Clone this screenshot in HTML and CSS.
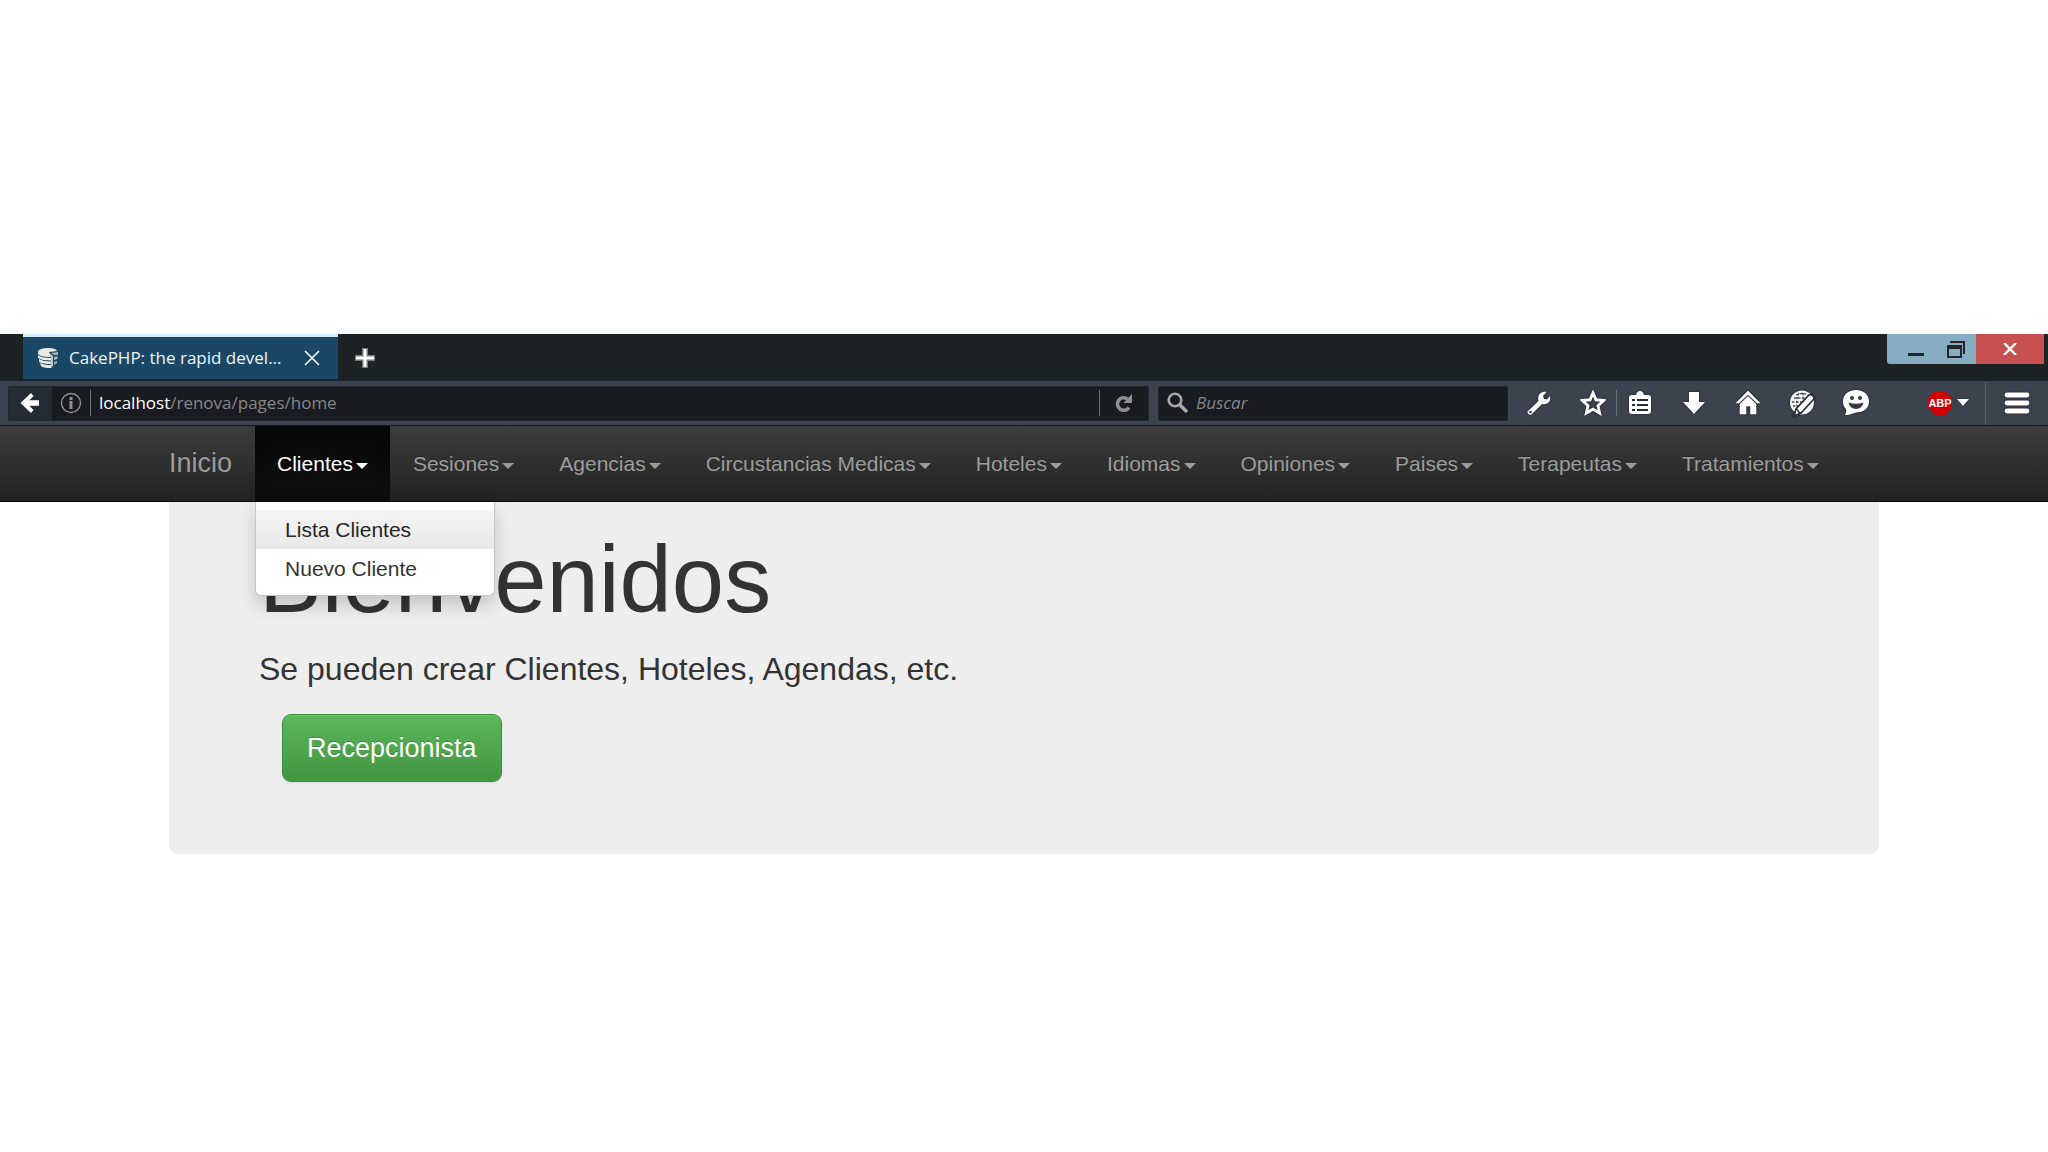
FILE: index.html
```html
<!DOCTYPE html>
<html lang="es">
<head>
<meta charset="utf-8">
<title>CakePHP: the rapid development php framework</title>
<link rel="stylesheet" href="styles.css">
</head>
<body>
<div class="browser">
  <div class="tabstrip">
    <div class="tab">
      <svg class="favicon" width="22" height="22" viewBox="0 0 22 22" aria-hidden="true">
        <path d="M1 4 Q3 1 11 1 Q19 1 20 4 L12 5 L14 10 Q4 10.500 1 7Z" fill="#e9e9e6"/>
        <path d="M1 8 Q4 11 14 11 V13.500 Q5 13.500 1 11Z M2 12 Q6 14.500 14 14.500 V17 Q6 17 2 15Z M3 16 Q7 18 14 18 V21 Q6 21 4 19Z" fill="#e9e9e6"/>
        <path d="M12 6 L14 10 V21 L16 19 V9Z" fill="#c3c6c7"/>
        <path d="M14 6 L21 5 V8 L17 8Z M17 10 L20.500 9 V12 L17 13Z M17 15 L20 14 V16 L17 18Z" fill="#9fb0bd"/>
      </svg>
      <span class="tab-title">CakePHP: the rapid devel...</span>
      <button class="plain tab-close" type="button" aria-label="Cerrar pestaña">
        <svg width="16" height="16" viewBox="0 0 16 16"><path d="M1 1 L15 15 M15 1 L1 15" stroke="#f2f6f9" stroke-width="1.7"/></svg>
      </button>
    </div>
    <button class="plain new-tab" type="button" aria-label="Nueva pestaña">
      <svg width="22" height="22" viewBox="0 0 22 22"><path d="M8 1 H14 V8 H21 V14 H14 V21 H8 V14 H1 V8 H8Z" fill="#777b7e"/><path d="M9.500 2 H12.500 V9.500 H20 V12.500 H12.500 V20 H9.500 V12.500 H2 V9.500 H9.500Z" fill="#fff"/></svg>
    </button>
    <div class="window-controls">
      <button class="plain win" type="button" aria-label="Minimizar"><svg width="16" height="18" viewBox="0 0 16 18"><path d="M0 13 H16 V16 H0Z" fill="#262626"/></svg></button>
      <button class="plain win win-restore" type="button" aria-label="Restaurar"><svg width="18" height="17" viewBox="0 0 18 17"><path d="M3 1 H17 V13" fill="none" stroke="#262626" stroke-width="2"/><path d="M0 4 H15 V17 H0Z M2 8 V15 H13 V8Z" fill="#262626" fill-rule="evenodd"/></svg></button>
      <button class="plain win win-close" type="button" aria-label="Cerrar"><svg width="14" height="12" viewBox="0 0 14 12"><path d="M1 0 L13 12 M13 0 L1 12" stroke="#fff" stroke-width="2.400"/></svg></button>
    </div>
  </div>

  <div class="toolbar">
    <div class="urlbar">
      <button class="plain back" type="button" aria-label="Atrás">
        <svg width="20" height="22" viewBox="0 0 20 22"><path d="M0.500 11 L11 1 L13.500 4 L9.500 8.300 H19 V13.700 H9.500 L13.500 18 L11 21Z" fill="#fff"/></svg>
      </button>
      <svg class="info" width="22" height="22" viewBox="0 0 22 22" aria-hidden="true"><circle cx="11" cy="11" r="9.500" fill="none" stroke="#8f9091" stroke-width="1.400"/><path d="M9.500 9 H12.500 V17 H9.500Z M9.500 5 H12.500 V8 H9.500Z" fill="#8f9091"/></svg>
      <div class="address"><span class="host">localhost</span>/renova/pages/home</div>
      <button class="plain reload" type="button" aria-label="Recargar">
        <svg width="18" height="19" viewBox="0 0 18 19"><path d="M14 13.500 A6.300 6.300 0 1 1 12.500 5" fill="none" stroke="#8f9092" stroke-width="3.500"/><path d="M17 0 V9 H8.500Z" fill="#8f9092"/></svg>
      </button>
    </div>
    <div class="search">
      <svg width="22" height="22" viewBox="0 0 22 22" aria-hidden="true"><circle cx="8" cy="8" r="6.300" fill="none" stroke="#a9aaab" stroke-width="2.600"/><path d="M12.500 12.500 L20 20" stroke="#a9aaab" stroke-width="3.400"/></svg>
      <input type="text" placeholder="Buscar" aria-label="Buscar">
    </div>
    <div class="tools tools-start">
      <button class="plain tool" type="button" aria-label="Herramientas"><svg width="26" height="26" viewBox="0 0 26 26"><path d="M2 21 L12.500 11 C11 5 15 1 20.500 2 L17 6 L18 9 L21 9.500 L24 6 C25.500 12 21 15 16 14 L6 24 Q4 25.500 2.500 24 Q.8 22.500 2 21Z" fill="#fff"/><circle cx="4.500" cy="22" r="1.300" fill="#3c434f"/></svg></button>
      <button class="plain tool" type="button" aria-label="Marcador"><svg width="26" height="26" viewBox="0 0 26 26"><path d="M13 3 L16 9.800 L23.500 10.500 L18 15.700 L19.600 23 L13 19.200 L6.400 23 L8 15.700 L2.500 10.500 L10 9.800Z" fill="none" stroke="#fff" stroke-width="2.900"/></svg></button>
    </div>
    <div class="tools">
      <button class="plain tool" type="button" aria-label="Lista de marcadores"><svg width="24" height="26" viewBox="0 0 24 26"><path d="M4 5 H8 Q9 1 12 1 Q15 1 16 5 H20 Q23 5 23 8 V21 Q23 24 20 24 H4 Q1 24 1 21 V8 Q1 5 4 5Z" fill="#fff"/><path d="M4 9 H7 V11 H4Z M9 9 H20 V11 H9Z M4 14 H7 V16 H4Z M9 14 H20 V16 H9Z M4 19 H7 V21 H4Z M9 19 H20 V21 H9Z" fill="#262c35"/></svg></button>
      <button class="plain tool" type="button" aria-label="Descargas"><svg width="24" height="26" viewBox="0 0 24 26"><path d="M7 2 H17 V12 H23 L12 24 L1 12 H7Z" fill="#fff"/></svg></button>
      <button class="plain tool" type="button" aria-label="Inicio"><svg width="26" height="26" viewBox="0 0 26 26"><path d="M13 1 L25 13 H22 L13 4.500 L4 13 H1Z M13 6.500 L21 14 V24 H15.500 V16 H11 V24 H5 V14Z" fill="#fff" stroke="#fff" stroke-width=".6"/></svg></button>
      <button class="plain tool" type="button" aria-label="Editor web"><svg width="28" height="28" viewBox="0 0 28 28"><circle cx="14" cy="13.500" r="12" fill="#f4f4f4"/><path d="M6 9 H20 M4 13 H16 M5 17 H12 M11 4 Q7 12 10 20 M15 4 V14 M8 6 Q14 3 20 6" fill="none" stroke="#4a515c" stroke-width="1.300" stroke-dasharray="2.500 1.500"/><path d="M6 27 L8 20 L21 6 Q23 5 25 7 Q27 9 25 11 L13 24Z" fill="#fff" stroke="#262c35" stroke-width="1.600"/><path d="M8 20 L10 21.500 L10.500 23 L13 24" fill="none" stroke="#262c35" stroke-width="1.400"/></svg></button>
      <button class="plain tool" type="button" aria-label="Chat"><svg width="28" height="28" viewBox="0 0 28 28"><path d="M14 1 C22 1 27 6 27 12.500 C27 19 22 23.500 14 23.500 C11 24.500 7 26.500 3 26 Q5 23 4 20 C2 18 1 16 1 12.500 C1 6 6 1 14 1Z" fill="#fff"/><circle cx="10" cy="9" r="2" fill="#303640"/><circle cx="18" cy="9" r="2" fill="#303640"/><path d="M6.500 13.500 Q14 16 21.500 13.500 Q20 20 14 20 Q8 20 6.500 13.500Z" fill="#303640"/></svg></button>
    </div>
    <button class="plain abp" type="button"><span class="abp-sign">ABP</span><svg width="12" height="8" viewBox="0 0 12 8" aria-hidden="true"><path d="M0 0 H12 L6 7Z" fill="#fff"/></svg></button>
    <button class="plain menu" type="button" aria-label="Menú"><svg width="26" height="22" viewBox="0 0 26 22"><path d="M3 3 H23 M3 11 H23 M3 19 H23" stroke="#fff" stroke-width="4.800" stroke-linecap="round"/></svg></button>
  </div>
</div>

<nav class="navbar">
  <div class="container nav-row">
    <a class="brand" href="#">Inicio</a>
    <ul class="nav">
      <li class="open"><a class="nav-link" href="#">Clientes<span class="caret"></span></a>
        <ul class="dropdown">
          <li><a class="current" href="#">Lista Clientes</a></li>
          <li><a href="#">Nuevo Cliente</a></li>
        </ul>
      </li>
      <li><a class="nav-link" href="#">Sesiones<span class="caret"></span></a></li>
      <li><a class="nav-link" href="#">Agencias<span class="caret"></span></a></li>
      <li><a class="nav-link" href="#">Circustancias Medicas<span class="caret"></span></a></li>
      <li><a class="nav-link" href="#">Hoteles<span class="caret"></span></a></li>
      <li><a class="nav-link" href="#">Idiomas<span class="caret"></span></a></li>
      <li><a class="nav-link" href="#">Opiniones<span class="caret"></span></a></li>
      <li><a class="nav-link" href="#">Paises<span class="caret"></span></a></li>
      <li><a class="nav-link" href="#">Terapeutas<span class="caret"></span></a></li>
      <li><a class="nav-link" href="#">Tratamientos<span class="caret"></span></a></li>
    </ul>
  </div>
</nav>

<main class="container jumbotron">
  <h1>Bienvenidos</h1>
  <p class="lead">Se pueden crear Clientes, Hoteles, Agendas, etc.</p>
  <button class="btn" type="button">Recepcionista</button>
</main>
</body>
</html>
```

FILE: styles.css
```css
* { box-sizing: border-box; }

body {
  margin: 0;
  padding-top: 334px;
  background: #fff;
  color: #333;
  font-family: "Liberation Sans", Arial, sans-serif;
  font-size: 21px;
}

ul { margin: 0; padding: 0; list-style: none; }
a { text-decoration: none; }
svg { display: block; flex: none; }

.plain {
  display: flex;
  flex: none;
  align-items: center;
  justify-content: center;
  padding: 0;
  border: 0;
  background: none;
  font: inherit;
}

/* Browser window */
.browser { font-family: "Open Sans", "Noto Sans", sans-serif; }

.tabstrip {
  display: flex;
  align-items: flex-start;
  height: 47px;
  padding: 0 4px 0 23px;
  background: #1d2225;
  border-bottom: 2px solid #18222c;
}

.tab {
  display: flex;
  align-items: center;
  width: 315px;
  height: 45px;
  padding: 0 18px 0 14px;
  background: #1a4766;
  border-top: 3px solid #d3effb;
  color: #f0f5f8;
}

.tab-title {
  flex: 1;
  margin-left: 10px;
  font-size: 17px;
  line-height: 24px;
  white-space: nowrap;
}

.new-tab { width: 54px; height: 47px; }

.window-controls { display: flex; margin-left: auto; }
.win { width: 49px; height: 30px; background: #87adc2; padding-left: 8px; }
.win:first-child { border-bottom-left-radius: 3px; }
.win-restore { width: 40px; padding-left: 0; }
.win-close { width: 68px; background: #c75050; padding-left: 0; }

.toolbar {
  display: flex;
  align-items: center;
  height: 45px;
  padding: 0 4px 0 8px;
  background: #3c434f;
  border-bottom: 1px solid #15181b;
}

.urlbar, .search {
  display: flex;
  align-items: center;
  height: 35px;
  background: #181b1f;
  border: 1px solid #20262e;
  border-radius: 2px;
}

.urlbar { flex: 1; margin-right: 9px; }
.back { width: 43px; height: 33px; padding-right: 2px; background: #252b34; }
.info { margin-left: 8px; }

.address {
  flex: 1;
  margin-left: 8px;
  padding-left: 8px;
  border-left: 1px solid #6f7275;
  color: #85878a;
  font-size: 17px;
  line-height: 26px;
}

.host { color: #fff; }
.reload { width: 49px; height: 26px; border-left: 1px solid #6f7275; }

.search { width: 350px; margin-right: 10px; padding-left: 8px; }

.search input {
  flex: 1;
  min-width: 0;
  padding: 0 7px;
  border: 0;
  background: none;
  color: #fff;
  font: italic 17px/26px "Open Sans", "Noto Sans", sans-serif;
}

.search input::placeholder { color: #85878a; opacity: 1; }

.tools { display: flex; gap: 12px; }
.tools-start { margin-right: 2px; padding-right: 2px; border-right: 1px solid #6b717b; }
.tool { width: 42px; height: 26px; }
.tool svg, .abp svg, .menu svg { filter: drop-shadow(0 0 1px #15191f); }

.abp { gap: 5px; margin-left: 51px; padding-right: 16px; }

.abp-sign {
  width: 24px;
  height: 24px;
  background: #d10000;
  clip-path: polygon(30% 0, 70% 0, 100% 30%, 100% 70%, 70% 100%, 30% 100%, 0 70%, 0 30%);
  color: #fff;
  font: bold 11px/24px "Liberation Sans", Arial, sans-serif;
  text-align: center;
}

.menu { width: 59px; height: 43px; padding-left: 4px; border-left: 1px solid #565d68; }

/* Site */
.container { width: 84%; max-width: 1710px; margin: 0 auto; }

.navbar {
  height: 76px;
  background: linear-gradient(#3c3c3c, #222);
  border-bottom: 1px solid #080808;
}

.nav-row { display: flex; }

.brand {
  padding-right: 23px;
  color: #9d9d9d;
  font-size: 27px;
  line-height: 75px;
  text-shadow: 0 -1px 0 rgba(0, 0, 0, .25);
}

.nav { display: flex; }
.nav > li { position: relative; }

.nav-link {
  display: flex;
  align-items: center;
  gap: 3px;
  margin-right: 1px;
  padding: 0 22px;
  color: #9d9d9d;
  line-height: 75px;
  white-space: nowrap;
  text-shadow: 0 -1px 0 rgba(0, 0, 0, .25);
}

.open .nav-link {
  background: linear-gradient(#080808, #0f0f0f);
  box-shadow: inset 0 4px 13px rgba(0, 0, 0, .25);
  color: #fff;
}

.caret {
  margin-top: 4px;
  border: 6px solid transparent;
  border-top-color: currentColor;
  border-bottom: 0;
}

.dropdown {
  position: absolute;
  top: 76px;
  left: 0;
  width: 240px;
  padding: 8px 0 7px;
  background: #fff;
  border: 1px solid #c5c5c5;
  border-top: 0;
  border-radius: 0 0 6px 6px;
  box-shadow: 0 9px 18px rgba(0, 0, 0, .175);
}

.dropdown a {
  display: block;
  padding: 0 29px;
  color: #333;
  line-height: 39px;
}

.dropdown .current {
  background: linear-gradient(#f5f5f5, #e8e8e8);
  color: #262626;
}

.jumbotron {
  padding: 26px 90px 72px;
  background: #eee;
  border-radius: 0 0 9px 9px;
}

h1 { margin: 0 0 15px; font-size: 94px; font-weight: 400; line-height: 104px; }
.lead { margin: 0 0 23px; font-size: 32px; line-height: 44px; }

.btn {
  display: block;
  margin-left: 23px;
  padding: 15px 24px;
  border: 1px solid #3e8f3e;
  border-radius: 9px;
  background: linear-gradient(#5cb85c, #419641);
  box-shadow: inset 0 1px 0 rgba(255, 255, 255, .15), 0 1px 2px rgba(0, 0, 0, .1);
  color: #fff;
  font: 27px/36px "Liberation Sans", Arial, sans-serif;
  text-shadow: 0 -1px 0 rgba(0, 0, 0, .2);
}
```
